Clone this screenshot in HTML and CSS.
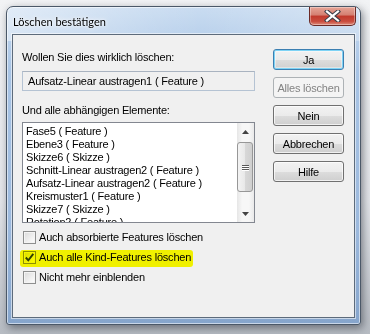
FILE: index.html
```html
<!DOCTYPE html>
<html>
<head>
<meta charset="utf-8">
<link rel="stylesheet" href="styles.css">
</head>
<body>
<div class="window">
  <div class="titlebar">
    <span class="title">Löschen bestätigen</span>
    <div class="close">
      <svg width="17" height="12" viewBox="0 0 17 12"><path d="M3 1.5 L14 10.5 M14 1.5 L3 10.5" stroke="#3b3f4a" stroke-width="4.2" stroke-linecap="square"/><path d="M3 1.5 L14 10.5 M14 1.5 L3 10.5" stroke="#ffffff" stroke-width="2.2" stroke-linecap="square"/></svg>
    </div>
  </div>
  <div class="client">
    <div class="left">
      <div class="label">Wollen Sie dies wirklich löschen:</div>
      <div class="textbox">Aufsatz-Linear austragen1 ( Feature )</div>
      <div class="label label2">Und alle abhängigen Elemente:</div>
      <div class="listbox">
        <div class="items">
          <div class="item">Fase5 ( Feature )</div>
          <div class="item">Ebene3 ( Feature )</div>
          <div class="item">Skizze6 ( Skizze )</div>
          <div class="item">Schnitt-Linear austragen2 ( Feature )</div>
          <div class="item">Aufsatz-Linear austragen2 ( Feature )</div>
          <div class="item">Kreismuster1 ( Feature )</div>
          <div class="item">Skizze7 ( Skizze )</div>
          <div class="item">Rotation2 ( Feature )</div>
        </div>
        <div class="scrollbar">
          <div class="sbtn"><svg width="7" height="4" viewBox="0 0 7 4"><path d="M0 4 L3.5 0 L7 4 Z" fill="#444"/></svg></div>
          <div class="track">
            <div class="thumb">
              <div class="grip"></div><div class="grip"></div><div class="grip"></div>
            </div>
          </div>
          <div class="sbtn"><svg width="7" height="4" viewBox="0 0 7 4"><path d="M0 0 L7 0 L3.5 4 Z" fill="#444"/></svg></div>
        </div>
      </div>
      <div class="checks">
        <label class="check"><span class="box"></span>Auch absorbierte Features löschen</label>
        <label class="check marked"><span class="box"><svg width="11" height="11" viewBox="0 0 11 11"><path d="M1.8 5.5 L4.3 8.3 L9.3 1.8" fill="none" stroke="#2f3f5a" stroke-width="1.9"/></svg></span>Auch alle Kind-Features löschen<span class="highlight"></span></label>
        <label class="check"><span class="box"></span>Nicht mehr einblenden</label>
      </div>
    </div>
    <div class="right">
      <button class="btn default">Ja</button>
      <button class="btn disabled">Alles löschen</button>
      <button class="btn">Nein</button>
      <button class="btn">Abbrechen</button>
      <button class="btn">Hilfe</button>
    </div>
  </div>
</div>
</body>
</html>
```

FILE: styles.css
```css
html, body {
  margin: 0;
  padding: 0;
}
body {
  width: 370px;
  height: 334px;
  overflow: hidden;
  background: linear-gradient(#f2f3f5 0%, #e4e6ea 60%, #b7bcc3 100%);
  padding: 6px 0 0 6px;
  box-sizing: border-box;
  font-family: "Liberation Sans", Arial, sans-serif;
}
.window {
  width: 355px;
  height: 319px;
  box-sizing: border-box;
  border: 1px solid #4b5868;
  border-radius: 7px 7px 3px 3px;
  background:
    linear-gradient(90deg, rgba(255,255,255,0.45) 0%, rgba(255,255,255,0.1) 40%, rgba(255,255,255,0) 55%, rgba(255,255,255,0.25) 100%) top/100% 34px no-repeat,
    linear-gradient(#c9dcf1 0%, #a8c4e5 20%, #9cb9dd 70%, #86a5cc 100%);
  box-shadow: inset 0 0 0 1px rgba(255,255,255,0.55), 2px 3px 8px rgba(40,45,55,0.55);
  display: flex;
  flex-direction: column;
}
.titlebar {
  height: 27px;
  flex: none;
  display: flex;
  justify-content: space-between;
  align-items: flex-start;
  padding: 0 4px 0 6px;
}
.title {
  font-family: Lato, "Open Sans", sans-serif;
  font-size: 11px;
  line-height: 14px;
  margin-top: 8px;
  color: #000;
  text-shadow: 0 0 6px #fff, 0 0 3px #fff;
}
.close {
  width: 47px;
  height: 19px;
  box-sizing: border-box;
  border: 1px solid #6b2a26;
  border-top: none;
  border-radius: 0 0 5px 5px;
  background: linear-gradient(#e6a597 0%, #d47f71 45%, #c1392c 50%, #c94d3f 80%, #de8d7c 100%);
  box-shadow: inset 0 0 0 1px rgba(255,255,255,0.35);
  display: flex;
  align-items: center;
  justify-content: center;
}
.client {
  flex: none;
  height: 284px;
  margin: 0 5px;
  box-sizing: border-box;
  border: 1px solid #5d6b7b;
  box-shadow: 0 0 0 1px rgba(255,255,255,0.55);
  background: #f0f0f0;
  display: grid;
  grid-template-columns: 233px 71px;
  column-gap: 18px;
  align-items: start;
  padding: 14px 0 0 9px;
  font-size: 11px;
  letter-spacing: -0.2px;
  color: #000;
}
.left {
  display: flex;
  flex-direction: column;
  margin-top: 2px;
}
.label {
  height: 13px;
  line-height: 13px;
  white-space: nowrap;
}
.textbox {
  margin-top: 7px;
  height: 20px;
  box-sizing: border-box;
  border: 1px solid #b5c3d3;
  border-top-color: #a9b3c0;
  background: #f0f0f0;
  line-height: 18px;
  padding-left: 5px;
  white-space: nowrap;
}
.label2 {
  margin-top: 13px;
}
.listbox {
  margin-top: 5px;
  height: 101px;
  box-sizing: border-box;
  border: 1px solid #838790;
  background: #fff;
  display: flex;
  overflow: hidden;
}
.items {
  flex: 1;
  padding: 2px 0 0 3px;
  overflow: hidden;
}
.item {
  height: 13px;
  line-height: 13px;
  white-space: nowrap;
}
.scrollbar {
  width: 17px;
  flex: none;
  display: flex;
  flex-direction: column;
  background: linear-gradient(90deg, #e6e6e6, #f7f7f7 30%, #f7f7f7 70%, #eaeaea);
}
.sbtn {
  height: 17px;
  flex: none;
  display: flex;
  align-items: center;
  justify-content: center;
}
.track {
  flex: 1;
  padding: 2px 1px 0 0;
}
.thumb {
  height: 50px;
  box-sizing: border-box;
  border: 1px solid #979797;
  border-radius: 3px;
  background: linear-gradient(90deg, #f3f3f3, #e8e8e8 50%, #d8d8d8 51%, #cfcfcf);
  display: flex;
  flex-direction: column;
  align-items: center;
  justify-content: center;
  gap: 1px;
}
.grip {
  width: 7px;
  height: 1px;
  background: #5a5a5a;
  box-shadow: 0 1px 0 #fff;
}
.checks {
  margin-top: 8px;
  display: flex;
  flex-direction: column;
}
.check {
  position: relative;
  height: 20px;
  display: flex;
  align-items: flex-start;
  gap: 3px;
  padding-left: 1px;
  line-height: 13px;
  white-space: nowrap;
}
.check .box {
  width: 13px;
  height: 13px;
  box-sizing: border-box;
  border: 1px solid #8e8f8f;
  background: linear-gradient(135deg, #dadada, #f4f4f4 70%, #ffffff);
  box-shadow: inset 0 0 0 1px #f4f4f4;
  display: flex;
  align-items: center;
  justify-content: center;
  flex: none;
}
.highlight {
  position: absolute;
  left: -2px;
  top: -1px;
  width: 173px;
  height: 17px;
  background: #ffff00;
  mix-blend-mode: multiply;
  border-radius: 3px;
  filter: blur(0.6px);
  pointer-events: none;
}
.right {
  display: flex;
  flex-direction: column;
  gap: 7px;
}
.btn {
  height: 21px;
  width: 71px;
  box-sizing: border-box;
  border: 1px solid #707070;
  border-radius: 3px;
  background: linear-gradient(#f2f2f2 0%, #ebebeb 50%, #dddddd 51%, #cfcfcf 100%);
  box-shadow: inset 0 0 0 1px rgba(255,255,255,0.7);
  font: inherit;
  font-size: 11px;
  letter-spacing: -0.2px;
  color: #000;
  padding: 0;
  margin: 0;
  white-space: nowrap;
}
.btn.default {
  border-color: #3c7fb1;
  box-shadow: inset 0 0 0 1px #7ed3f5, inset 0 0 0 2px rgba(255,255,255,0.4);
}
.btn.disabled {
  border-color: #adb2b5;
  background: #f4f4f4;
  box-shadow: none;
  color: #838383;
}
```
